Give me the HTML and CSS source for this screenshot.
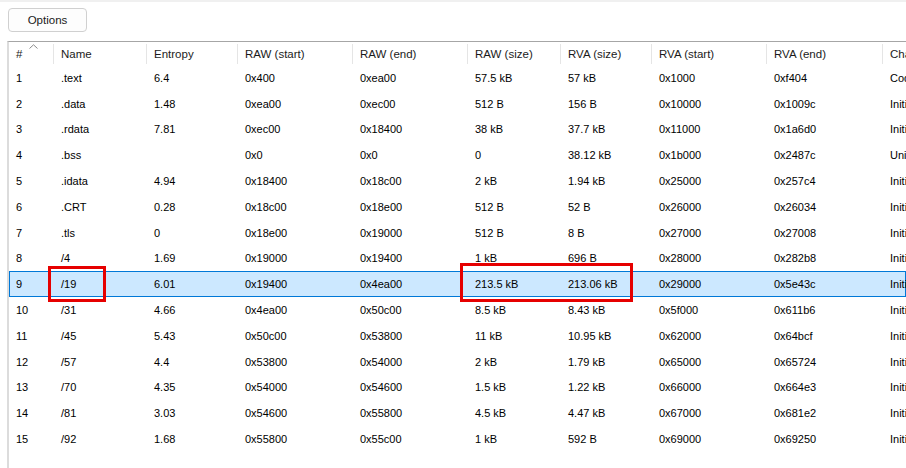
FILE: index.html
```html
<!DOCTYPE html>
<html>
<head>
<meta charset="utf-8">
<link rel="stylesheet" href="styles.css">
</head>
<body>
<div class="topstrip"></div>
<div class="toolbar"><button class="btn">Options</button></div>
<div class="grid-wrap">
  <div class="row head">
    <div class="hc hash">#<svg class="sort" width="9" height="5" viewBox="0 0 9 5"><polyline points="0.5,4.5 4.5,0.8 8.5,4.5" fill="none" stroke="#8a8a8a" stroke-width="1"/></svg></div>
    <div class="hc">Name</div>
    <div class="hc">Entropy</div>
    <div class="hc">RAW (start)</div>
    <div class="hc">RAW (end)</div>
    <div class="hc">RAW (size)</div>
    <div class="hc">RVA (size)</div>
    <div class="hc">RVA (start)</div>
    <div class="hc">RVA (end)</div>
    <div class="hc last">Characteristics</div>
  </div>
  <div class="row"><div>1</div><div>.text</div><div>6.4</div><div>0x400</div><div>0xea00</div><div>57.5 kB</div><div>57 kB</div><div>0x1000</div><div>0xf404</div><div>Code</div></div>
  <div class="row"><div>2</div><div>.data</div><div>1.48</div><div>0xea00</div><div>0xec00</div><div>512 B</div><div>156 B</div><div>0x10000</div><div>0x1009c</div><div>Initialized data</div></div>
  <div class="row"><div>3</div><div>.rdata</div><div>7.81</div><div>0xec00</div><div>0x18400</div><div>38 kB</div><div>37.7 kB</div><div>0x11000</div><div>0x1a6d0</div><div>Initialized data</div></div>
  <div class="row"><div>4</div><div>.bss</div><div></div><div>0x0</div><div>0x0</div><div>0</div><div>38.12 kB</div><div>0x1b000</div><div>0x2487c</div><div>Uninitialized data</div></div>
  <div class="row"><div>5</div><div>.idata</div><div>4.94</div><div>0x18400</div><div>0x18c00</div><div>2 kB</div><div>1.94 kB</div><div>0x25000</div><div>0x257c4</div><div>Initialized data</div></div>
  <div class="row"><div>6</div><div>.CRT</div><div>0.28</div><div>0x18c00</div><div>0x18e00</div><div>512 B</div><div>52 B</div><div>0x26000</div><div>0x26034</div><div>Initialized data</div></div>
  <div class="row"><div>7</div><div>.tls</div><div>0</div><div>0x18e00</div><div>0x19000</div><div>512 B</div><div>8 B</div><div>0x27000</div><div>0x27008</div><div>Initialized data</div></div>
  <div class="row"><div>8</div><div>/4</div><div>1.69</div><div>0x19000</div><div>0x19400</div><div>1 kB</div><div>696 B</div><div>0x28000</div><div>0x282b8</div><div>Initialized data</div></div>
  <div class="row sel"><div>9</div><div>/19</div><div>6.01</div><div>0x19400</div><div>0x4ea00</div><div>213.5 kB</div><div>213.06 kB</div><div>0x29000</div><div>0x5e43c</div><div>Initialized data</div></div>
  <div class="row"><div>10</div><div>/31</div><div>4.66</div><div>0x4ea00</div><div>0x50c00</div><div>8.5 kB</div><div>8.43 kB</div><div>0x5f000</div><div>0x611b6</div><div>Initialized data</div></div>
  <div class="row"><div>11</div><div>/45</div><div>5.43</div><div>0x50c00</div><div>0x53800</div><div>11 kB</div><div>10.95 kB</div><div>0x62000</div><div>0x64bcf</div><div>Initialized data</div></div>
  <div class="row"><div>12</div><div>/57</div><div>4.4</div><div>0x53800</div><div>0x54000</div><div>2 kB</div><div>1.79 kB</div><div>0x65000</div><div>0x65724</div><div>Initialized data</div></div>
  <div class="row"><div>13</div><div>/70</div><div>4.35</div><div>0x54000</div><div>0x54600</div><div>1.5 kB</div><div>1.22 kB</div><div>0x66000</div><div>0x664e3</div><div>Initialized data</div></div>
  <div class="row"><div>14</div><div>/81</div><div>3.03</div><div>0x54600</div><div>0x55800</div><div>4.5 kB</div><div>4.47 kB</div><div>0x67000</div><div>0x681e2</div><div>Initialized data</div></div>
  <div class="row"><div>15</div><div>/92</div><div>1.68</div><div>0x55800</div><div>0x55c00</div><div>1 kB</div><div>592 B</div><div>0x69000</div><div>0x69250</div><div>Initialized data</div></div>
  <div class="mark mark-name"></div>
  <div class="mark mark-size"></div>
</div>
</body>
</html>
```
FILE: styles.css
```css
html, body {
  margin: 0;
  padding: 0;
  background: #ffffff;
  width: 906px;
  height: 468px;
  overflow: hidden;
  font-family: "Liberation Sans", Arial, sans-serif;
  color: #000;
}
.topstrip {
  height: 2px;
  background: #f0f0f0;
}
.toolbar {
  height: 39px;
  padding: 6px 0 0 8px;
  box-sizing: border-box;
}
.btn {
  display: block;
  width: 79px;
  height: 24px;
  margin: 0;
  padding: 0;
  background: #fdfdfd;
  border: 1px solid #d0d0d0;
  border-radius: 4px;
  font-family: "Liberation Sans", Arial, sans-serif;
  font-size: 11.5px;
  color: #1a1a1a;
}
.grid-wrap {
  position: relative;
  margin-left: 7px;
  height: 427px;
  border-top: 1px solid #a6a6a6;
  border-left: 2px solid #dcdcdc;
  overflow: hidden;
}
.row {
  display: grid;
  grid-template-columns: 45px 93px 91px 115px 115px 93px 91px 115px 116px 200px;
  height: 25.8px;
  align-items: center;
  font-size: 11px;
  white-space: nowrap;
}
.row > div {
  padding-left: 7px;
  overflow: hidden;
}
.row.head {
  height: 23px;
  align-items: stretch;
  font-size: 11.5px;
  color: #1b1b1b;
}
.row.head .hc {
  position: relative;
  margin: 2px 0 1px;
  border-right: 1px solid #e5e5e5;
  display: flex;
  align-items: center;
}
.row.head .hc.last {
  border-right: none;
}
.hc.hash {
  border-right-color: #e5e5e5;
}
.sort {
  position: absolute;
  left: 20px;
  top: 0;
}
.row.sel {
  background: #cce8ff;
  box-shadow: inset 0 0 0 1px #0078d7;
}
.mark {
  position: absolute;
  border: 3px solid #e60000;
  box-sizing: border-box;
}
.mark-name {
  left: 39px;
  top: 224px;
  width: 58px;
  height: 36px;
}
.mark-size {
  left: 451px;
  top: 221px;
  width: 173px;
  height: 39px;
}
```
